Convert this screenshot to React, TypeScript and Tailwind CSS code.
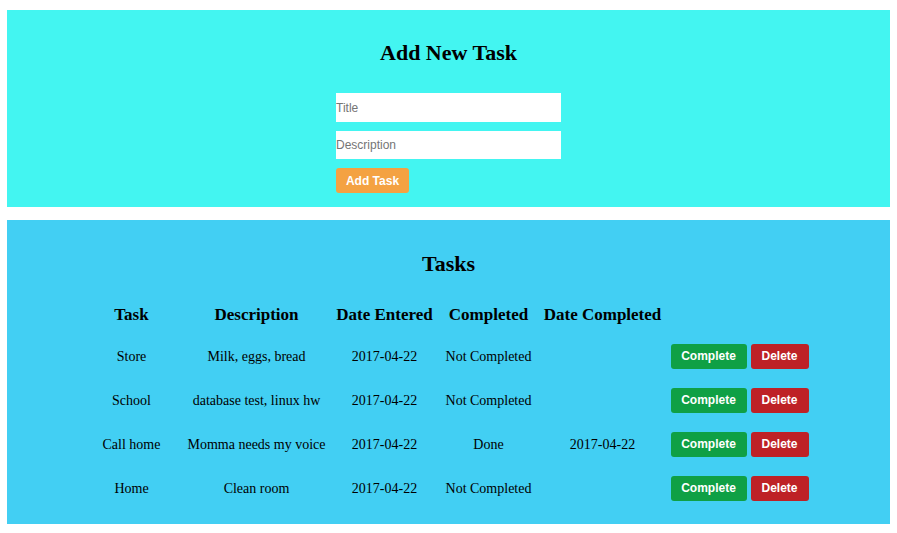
import React, { useState } from 'react';

interface Task {
    title: string;
    description: string;
    entered: string;
    completed: string;
}

const initialTasks: Task[] = [
    { title: 'Store', description: 'Milk, eggs, bread', entered: '2017-04-22', completed: '' },
    { title: 'School', description: 'database test, linux hw', entered: '2017-04-22', completed: '' },
    { title: 'Call home', description: 'Momma needs my voice', entered: '2017-04-22', completed: '2017-04-22' },
    { title: 'Home', description: 'Clean room', entered: '2017-04-22', completed: '' },
];

const App: React.FC = () => {
    const [tasks, setTasks] = useState<Task[]>(initialTasks);
    const [title, setTitle] = useState('');
    const [description, setDescription] = useState('');

    const addTask = () => {
        if (!title) return;
        setTasks([...tasks, { title, description, entered: '2017-04-22', completed: '' }]);
        setTitle('');
        setDescription('');
    };

    return (
        <div className="min-h-[533px] bg-white px-[7px] pt-[10px] font-['Liberation_Serif',serif] text-black">
            {/* Add form */}
            <section className="flex flex-col items-center bg-[#43f5f1] pt-[30px] pb-[14px]">
                <h2 className="text-[22px] font-bold leading-[26px]">Add New Task</h2>
                <div className="mt-[27px] flex w-[225px] flex-col items-start font-['Liberation_Sans',sans-serif]">
                    <input
                        value={title}
                        onChange={(e) => setTitle(e.target.value)}
                        placeholder="Title"
                        className="h-[29px] w-full bg-white p-0 text-[12px] outline-none placeholder:text-[#757575]"
                    />
                    <input
                        value={description}
                        onChange={(e) => setDescription(e.target.value)}
                        placeholder="Description"
                        className="mt-[9px] h-[28px] w-full bg-white p-0 text-[12px] outline-none placeholder:text-[#757575]"
                    />
                    <button
                        onClick={addTask}
                        className="mt-[9px] h-[25px] w-[73px] rounded-[3px] bg-[#f4a242] text-[12px] font-bold text-white"
                    >
                        Add Task
                    </button>
                </div>
            </section>

            {/* Task list */}
            <section className="mt-[13px] flex flex-col items-center bg-[#42cff3] pt-[31px] pb-[14px]">
                <h2 className="text-[22px] font-bold leading-[26px]">Tasks</h2>
                <div className="mt-[18px] flex w-full justify-center pr-[8px]">
                    <table className="table-fixed border-collapse text-center">
                        <colgroup>
                            <col className="w-[108px]" />
                            <col className="w-[142px]" />
                            <col className="w-[114px]" />
                            <col className="w-[94px]" />
                            <col className="w-[134px]" />
                            <col className="w-[142px]" />
                        </colgroup>
                        <thead>
                            <tr className="h-[39px] text-[17px] font-bold">
                                <th className="p-0">Task</th>
                                <th className="p-0">Description</th>
                                <th className="p-0">Date Entered</th>
                                <th className="p-0">Completed</th>
                                <th className="p-0">Date Completed</th>
                                <th className="p-0"></th>
                            </tr>
                        </thead>
                        <tbody className="text-[14px]">
                            {tasks.map((t, i) => (
                                <tr key={i} className="h-[44px]">
                                    <td className="p-0">{t.title}</td>
                                    <td className="p-0 whitespace-nowrap">{t.description}</td>
                                    <td className="p-0">{t.entered}</td>
                                    <td className="p-0">{t.completed ? 'Done' : 'Not Completed'}</td>
                                    <td className="p-0">{t.completed}</td>
                                    <td className="p-0">
                                        <div className="flex justify-center gap-[4px] pr-[2px] font-['Liberation_Sans',sans-serif] text-[12px] font-bold text-white">
                                            <button
                                                onClick={() =>
                                                    setTasks(tasks.map((x, j) => (j === i ? { ...x, completed: '2017-04-22' } : x)))
                                                }
                                                className="h-[25px] w-[76px] rounded-[3px] bg-[#0fa045]"
                                            >
                                                Complete
                                            </button>
                                            <button
                                                onClick={() => setTasks(tasks.filter((_, j) => j !== i))}
                                                className="h-[25px] w-[58px] rounded-[3px] bg-[#be2126]"
                                            >
                                                Delete
                                            </button>
                                        </div>
                                    </td>
                                </tr>
                            ))}
                        </tbody>
                    </table>
                </div>
            </section>
        </div>
    );
};

export default App;
